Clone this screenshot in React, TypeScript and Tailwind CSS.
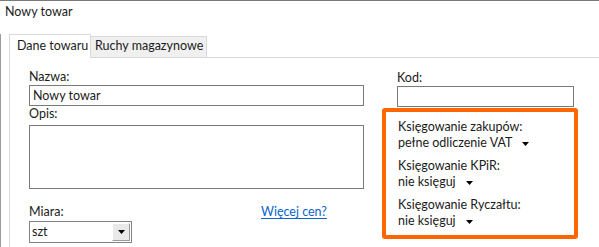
import React from "react";

function Caret({ className = "" }: { className?: string }) {
  return (
    <svg width="8" height="4" viewBox="0 0 8 4" className={className}>
      <path d="M0 0 H7 L3.5 4 Z" fill="#000" />
    </svg>
  );
}

function Field({ label, value }: { label: string; value: string }) {
  return (
    <div className="flex flex-col">
      <div className="leading-[16px] h-[16px]">{label}</div>
      <div className="flex items-center leading-[16px] h-[16px]">
        <span>{value}</span>
        <Caret className="ml-[10px] mt-[1px]" />
      </div>
    </div>
  );
}

export default function App() {
  return (
    <div className="w-[599px] h-[247px] overflow-hidden bg-white border-t border-[#7a7a7a] text-[12.5px] text-[#1b1b1b] font-['Lato','Noto_Sans',sans-serif]">
      <div className="h-[33px] pl-[5px] pt-[3px] leading-[16px]">Nowy towar</div>
      <div className="border-l border-[#9a9a9a] pl-[8px] h-[213px]">
        <div className="flex items-end h-[23px]">
          <div className="relative z-10 -mb-px h-[24px] w-[82px] bg-white border border-b-0 border-[#d9d9d9] pl-[7px] pt-[3px] leading-[16px] whitespace-nowrap">
            Dane towaru
          </div>
          <div className="h-[21px] w-[116px] bg-[#f0f0f0] border border-l-0 border-b-0 border-[#d9d9d9] pl-[4px] pt-[1px] leading-[16px] whitespace-nowrap">
            Ruchy magazynowe
          </div>
        </div>
        <div className="border-t border-l border-[#d9d9d9] h-[200px] pl-[19px] pt-[11px] flex gap-[18px]">
          <div className="w-[335px] flex flex-col">
            <div className="leading-[16px] h-[16px]">Nazwa:</div>
            <div className="h-[21px] border border-[#7a7a7a] px-[3px] leading-[19px]">Nowy towar</div>
            <div className="leading-[16px] h-[16px] mt-0">Opis:</div>
            <div className="h-[64px] border border-[#7a7a7a] mt-[3px]" />
            <div className="flex leading-[16px] h-[16px] mt-[15px]">
              <span className="w-[232px]">Miara:</span>
              <a className="text-[#0a66cc] underline underline-offset-[2px] cursor-pointer">Więcej cen?</a>
            </div>
            <div className="mt-[1px] w-[103px] h-[22px] border border-[#828282] flex items-stretch">
              <div className="flex-1 pl-[2px] leading-[20px]">szt</div>
              <div className="w-[18px] my-px mr-px bg-[#e9e9e9] border border-t-white border-l-white border-r-[#9a9a9a] border-b-[#9a9a9a] flex items-center justify-center">
                <svg width="7" height="4" viewBox="0 0 7 4">
                  <path d="M0 0 H7 L3.5 4 Z" fill="#000" />
                </svg>
              </div>
            </div>
          </div>
          <div className="w-[196px] flex flex-col">
            <div className="pl-[15px] leading-[16px] h-[16px] mt-px">Kod:</div>
            <div className="ml-[15px] w-[177px] h-[21px] border border-[#7a7a7a]" />
            <div className="mt-px h-[131px] border-[4px] border-[#ff6600] rounded-[3px] pl-[12px] pt-[7px] flex flex-col gap-[7px]">
              <Field label="Księgowanie zakupów:" value="pełne odliczenie VAT" />
              <Field label="Księgowanie KPiR:" value="nie księguj" />
              <Field label="Księgowanie Ryczałtu:" value="nie księguj" />
            </div>
          </div>
        </div>
      </div>
    </div>
  );
}
